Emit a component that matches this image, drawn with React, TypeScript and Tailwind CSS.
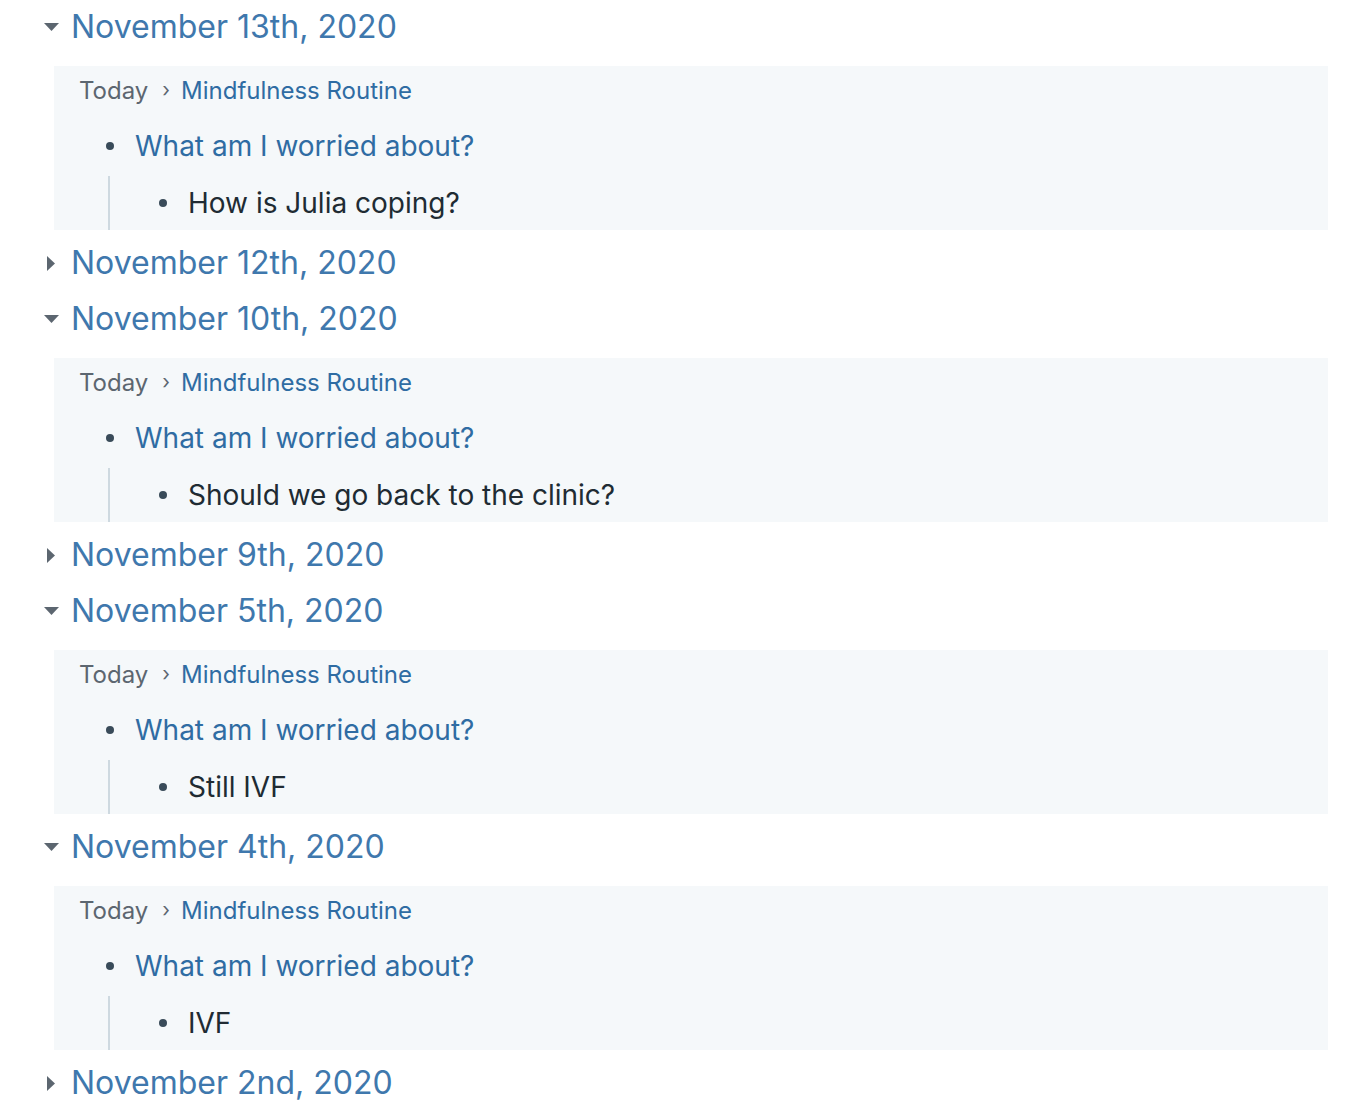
import React from "react";

type Day = {
  title: string;
  open: boolean;
  answer?: string;
};

const DAYS: Day[] = [
  { title: "November 13th, 2020", open: true, answer: "How is Julia coping?" },
  { title: "November 12th, 2020", open: false },
  { title: "November 10th, 2020", open: true, answer: "Should we go back to the clinic?" },
  { title: "November 9th, 2020", open: false },
  { title: "November 5th, 2020", open: true, answer: "Still IVF" },
  { title: "November 4th, 2020", open: true, answer: "IVF" },
  { title: "November 2nd, 2020", open: false },
];

function Caret({ open }: { open: boolean }) {
  return (
    <span className="w-[30px] flex justify-center items-center">
      {open ? (
        <svg width="17" height="10" viewBox="0 0 17 10">
          <path d="M1 1 L16 1 L8.5 9 Z" fill="#5c6670" />
        </svg>
      ) : (
        <svg width="10" height="17" viewBox="0 0 10 17">
          <path d="M1 1 L9 8.5 L1 16 Z" fill="#5c6670" />
        </svg>
      )}
    </span>
  );
}

function Bullet() {
  return <span className="w-[8px] h-[8px] rounded-full bg-[#394b59] block" />;
}

function Ref({ answer }: { answer: string }) {
  return (
    <div className="ml-[18px] mr-[42px] mt-[10px] mb-[6px] bg-[#f5f8fa]">
      <div className="flex items-center h-[50px] pl-[25px] text-[24px]">
        <span className="text-[#5c6670]">Today</span>
        <span className="ml-[14px] mr-[11px] text-[#5c6670] text-[20px] leading-none pb-[3px]">›</span>
        <span className="text-[#2f6ca3]">Mindfulness Routine</span>
      </div>
      <div className="flex items-center h-[60px] pl-[52px] text-[28px] text-[#2f6ca3]">
        <span className="w-[29px] flex"><Bullet /></span>
        <span>What am I worried about?</span>
      </div>
      <div className="ml-[54px] border-l-2 border-[#ced9e0] flex items-center h-[54px] pl-[49px] text-[28px] text-[#202b33]">
        <span className="w-[29px] flex"><Bullet /></span>
        <span>{answer}</span>
      </div>
    </div>
  );
}

export default function App() {
  return (
    <div className="min-h-screen bg-white pl-[36px] font-['Inter',sans-serif]">
      {DAYS.map((d) => (
        <div key={d.title}>
          <div className="flex items-center h-[56px] pb-[2px]">
            <Caret open={d.open} />
            <span className="ml-[5px] text-[32px] text-[#3f78ad]">{d.title}</span>
          </div>
          {d.open && d.answer && <Ref answer={d.answer} />}
        </div>
      ))}
    </div>
  );
}
